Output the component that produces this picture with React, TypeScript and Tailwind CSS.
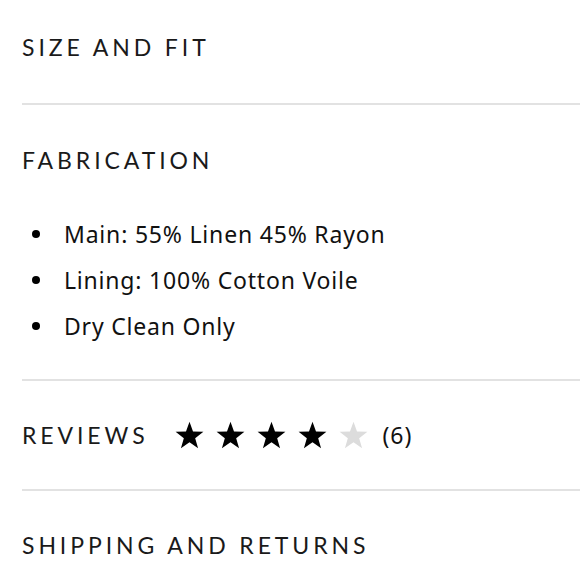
import React from "react";

const font = { fontFamily: "Lato, 'Noto Sans', sans-serif" };
const bodyFont = { fontFamily: "'Noto Sans', 'Open Sans', sans-serif" };

function Star({ filled }: { filled: boolean }) {
  return (
    <svg width="29" height="28" viewBox="0 0 24 23" className="block">
      <polygon
        points="12,0.5 14.9,8.6 23.5,8.8 16.7,14.1 19.1,22.5 12,17.5 4.9,22.5 7.3,14.1 0.5,8.8 9.1,8.6"
        fill={filled ? "#000000" : "#dcdcdc"}
      />
    </svg>
  );
}

function Divider() {
  return <div className="ml-[22px] h-[2px] bg-[#e2e2e2]" />;
}

function Heading({ children }: { children: React.ReactNode }) {
  return (
    <h2 className="text-[23px] leading-none tracking-[0.17em] text-[#1a1a1a] font-normal">
      {children}
    </h2>
  );
}

export default function App() {
  const items = [
    "Main: 55% Linen 45% Rayon",
    "Lining: 100% Cotton Voile",
    "Dry Clean Only",
  ];
  return (
    <div className="w-[580px] h-[580px] bg-white overflow-hidden" style={font}>
      <div className="h-[103px] pb-[8px] pl-[22px] flex items-center">
        <Heading>SIZE AND FIT</Heading>
      </div>
      <Divider />
      <div className="h-[110px] pl-[22px] flex items-center">
        <Heading>FABRICATION</Heading>
      </div>
      <ul className="-mt-[4px] pb-[30px]" style={bodyFont}>
        {items.map((t) => (
          <li key={t} className="h-[46px] flex items-center pl-[32px]">
            <span className="w-[8px] h-[8px] rounded-full bg-black mr-[24px]" />
            <span className="text-[23px] leading-none text-[#111] tracking-[0.035em]">{t}</span>
          </li>
        ))}
      </ul>
      <Divider />
      <div className="h-[108px] pl-[22px] flex items-center">
        <Heading>REVIEWS</Heading>
        <div className="flex items-center gap-[12px] ml-[26px]">
          <Star filled />
          <Star filled />
          <Star filled />
          <Star filled />
          <Star filled={false} />
        </div>
        <span className="ml-[15px] text-[23px] leading-none text-[#111] tracking-[0.04em]" style={bodyFont}>
          (6)
        </span>
      </div>
      <Divider />
      <div className="h-[108px] pl-[22px] flex items-center">
        <Heading>SHIPPING AND RETURNS</Heading>
      </div>
    </div>
  );
}
